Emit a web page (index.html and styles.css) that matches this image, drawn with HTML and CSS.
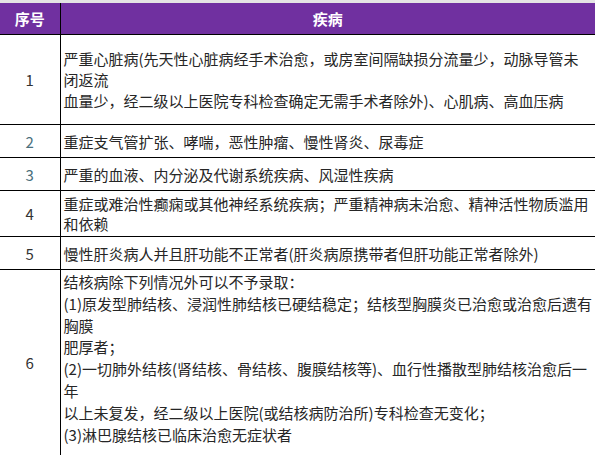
FILE: index.html
```html
<!DOCTYPE html>
<html lang="zh-CN">
<head>
<meta charset="utf-8">
<link rel="stylesheet" href="styles.css">
</head>
<body>
<div class="topbar"></div>
<table class="grid">
  <colgroup><col class="c-num"><col class="c-text"></colgroup>
  <thead>
    <tr class="head"><th>序号</th><th>疾病</th></tr>
  </thead>
  <tbody>
    <tr class="r1"><td class="num">1</td><td class="txt">严重心脏病(先天性心脏病经手术治愈，或房室间隔缺损分流量少，动脉导管未<br>闭返流<br>血量少，经二级以上医院专科检查确定无需手术者除外)、心肌病、高血压病</td></tr>
    <tr class="r-one"><td class="num alt">2</td><td class="txt">重症支气管扩张、哮喘，恶性肿瘤、慢性肾炎、尿毒症</td></tr>
    <tr class="r-one"><td class="num alt">3</td><td class="txt">严重的血液、内分泌及代谢系统疾病、风湿性疾病</td></tr>
    <tr class="r4"><td class="num">4</td><td class="txt tight">重症或难治性癫痫或其他神经系统疾病；严重精神病未治愈、精神活性物质滥用<br>和依赖</td></tr>
    <tr class="r-one"><td class="num">5</td><td class="txt">慢性肝炎病人并且肝功能不正常者(肝炎病原携带者但肝功能正常者除外)</td></tr>
    <tr class="r6"><td class="num">6</td><td class="txt loose">结核病除下列情况外可以不予录取：<br>(1)原发型肺结核、浸润性肺结核已硬结稳定；结核型胸膜炎已治愈或治愈后遗有<br>胸膜<br>肥厚者；<br>(2)一切肺外结核(肾结核、骨结核、腹膜结核等)、血行性播散型肺结核治愈后一<br>年<br>以上未复发，经二级以上医院(或结核病防治所)专科检查无变化；<br>(3)淋巴腺结核已临床治愈无症状者</td></tr>
  </tbody>
</table>
</body>
</html>
```

FILE: styles.css
```css
html, body {
  margin: 0;
  padding: 0;
  background: #ffffff;
}
body {
  width: 595px;
  height: 455px;
  overflow: hidden;
  font-family: "Microsoft YaHei", "Noto Sans CJK SC", "Noto Sans", sans-serif;
  color: #262626;
}
.topbar {
  height: 3px;
  background: #e4e4e4;
}
.grid {
  width: 595px;
  border-collapse: collapse;
  table-layout: fixed;
  font-size: 15px;
}
.c-num { width: 60px; }
.grid th {
  background: #7030a0;
  color: #ffffff;
  font-weight: bold;
  font-size: 15px;
  height: 31px;
  padding: 0;
  text-align: center;
  vertical-align: middle;
  border-bottom: 1px solid #000;
  line-height: 20px;
}
.grid th:first-child {
  border-right: 1px solid #000;
}
.grid td {
  border-top: 1px solid #000;
  vertical-align: middle;
  padding: 0;
  line-height: 21px;
}
.grid td.num {
  text-align: center;
  border-right: 1px solid #000;
  color: #333333;
}
.grid td.num.alt {
  color: #4a6f7c;
}
.grid td.txt {
  padding-left: 3px;
  white-space: nowrap;
  overflow: hidden;
}
.r1 { height: 90px; }
.r-one { height: 33px; }
.r4 { height: 46px; }
.grid td.tight { line-height: 20px; }
.grid td.loose {
  line-height: 21.8px;
  vertical-align: top;
  padding-top: 1px;
}
.r6 td { height: 184px; }
.r6 td.num { vertical-align: middle; }
```
